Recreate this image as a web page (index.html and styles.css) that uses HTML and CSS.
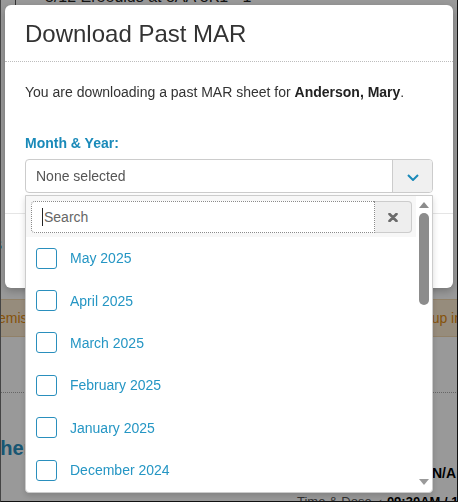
FILE: index.html
```html
<!DOCTYPE html>
<html lang="en">
<head>
<meta charset="utf-8">
<title>Download Past MAR</title>
<link rel="stylesheet" href="styles.css">
</head>
<body>
<div class="bg-page">
  <div class="bg-top"><span>5/12 Ereedius at 8AA 8K1 - 1</span></div>
  <div class="bg-s">S</div>
  <div class="bg-alert"><span class="a-left">Premise</span><span class="a-right">set up in</span></div>
  <div class="bg-rule"></div>
  <div class="bg-heading">Other</div>
  <div class="bg-na">N/A</div>
  <div class="bg-time"><span class="t-label">Time &amp; Dose <span class="t-check">✓</span></span> <b>09:30AM / 1 Tab</b></div>
</div>
<div class="backdrop"></div>
<div class="modal">
  <div class="modal-header"><h4 class="modal-title">Download Past MAR</h4></div>
  <div class="modal-body">
    <p class="intro">You are downloading a past MAR sheet for <b>Anderson, Mary</b>.</p>
    <div class="field-label">Month &amp; Year:</div>
    <div class="select">
      <div class="select-btn">
        <span class="select-text">None selected</span>
        <span class="select-caret"><svg width="12" height="7" viewBox="0 0 12 7"><polyline points="1,1 6,6 11,1" fill="none" stroke="#1a8ab9" stroke-width="2"/></svg></span>
      </div>
      <div class="dropdown">
        <div class="dd-main">
          <div class="dd-search">
            <div class="search-input"><span class="caret"></span>Search</div>
            <div class="search-clear"><svg width="10" height="9" viewBox="0 0 10 9"><path d="M1.5 1 L8.5 8 M8.5 1 L1.5 8" stroke="#6b6b6b" stroke-width="2.6" stroke-linecap="round"/></svg></div>
          </div>
          <ul class="dd-list">
            <li><span class="cb"></span>May 2025</li>
            <li><span class="cb"></span>April 2025</li>
            <li><span class="cb"></span>March 2025</li>
            <li><span class="cb"></span>February 2025</li>
            <li><span class="cb"></span>January 2025</li>
            <li><span class="cb"></span>December 2024</li>
            <li><span class="cb"></span>November 2024</li>
          </ul>
        </div>
        <div class="dd-scroll">
          <span class="arrow-up"></span>
          <span class="thumb"></span>
          <span class="arrow-down"></span>
        </div>
      </div>
    </div>
  </div>
  <div class="modal-footer"></div>
</div>
<div class="frame"></div>
</body>
</html>
```
FILE: styles.css
```css
* { box-sizing: border-box; }
html, body { margin: 0; padding: 0; }
body {
  width: 458px;
  height: 502px;
  overflow: hidden;
  background: #fff;
  font-family: "Liberation Sans", Arial, sans-serif;
  font-size: 14px;
  color: #333;
  position: relative;
}

/* background page (dimmed by backdrop) */
.bg-page { display: flex; flex-direction: column; }
.bg-top {
  height: 5px;
  overflow: hidden;
  display: flex;
  align-items: flex-end;
  margin-left: 15px;
  border-left: 1px solid #555;
  padding-left: 29px;
}
.bg-top span { font-size: 16px; line-height: 16px; color: #222; white-space: nowrap; }
.bg-s {
  margin-top: 232px;
  height: 16px;
  line-height: 16px;
  font-size: 15px;
  font-weight: bold;
  color: #1a8ab9;
  margin-left: -8px;
}
.bg-alert {
  margin-top: 46px;
  height: 38px;
  background: #fbe9cf;
  border-top: 1px solid #f2d7ad;
  border-bottom: 1px solid #f2d7ad;
  display: flex;
  justify-content: space-between;
  align-items: center;
  color: #e08a10;
  font-size: 14px;
  white-space: nowrap;
}
.a-left { margin-left: -16px; }
.a-right { margin-right: -4px; }
.bg-rule { margin-top: 55px; border-top: 1px dotted #aaa; }
.bg-heading {
  margin-top: 43px;
  margin-left: -22px;
  font-size: 20px;
  line-height: 24px;
  font-weight: bold;
  color: #2a8fbf;
}
.bg-na {
  margin-top: 5px;
  padding-left: 432px;
  font-size: 14px;
  line-height: 16px;
  font-weight: bold;
  color: #000;
  white-space: nowrap;
}
.bg-time {
  margin-top: 13px;
  padding-left: 297px;
  font-size: 13px;
  line-height: 16px;
  white-space: nowrap;
  color: #555;
}
.t-check { font-size: 10px; }
.bg-time b { color: #000; }

.backdrop {
  position: fixed;
  inset: 0;
  background: rgba(0, 0, 0, 0.4);
}

/* modal */
.modal {
  position: fixed;
  left: 5px;
  top: 5px;
  width: 448px;
  height: 283px;
  background: #fff;
  border-radius: 6px;
  box-shadow: 0 3px 9px rgba(0, 0, 0, 0.25);
  display: flex;
  flex-direction: column;
}
.modal-header {
  padding: 16px 20px 14px;
  border-bottom: 1px dotted #bdbdbd;
}
.modal-title {
  margin: 0;
  font-size: 24px;
  line-height: 26px;
  font-weight: normal;
  color: #333;
}
.modal-body { padding: 20px 20px 20px; }
.intro { margin: 0 0 31px; line-height: 20px; }
.intro b { color: #222; }
.field-label {
  font-weight: bold;
  color: #1a8ab9;
  line-height: 20px;
  margin-bottom: 6px;
}
.select { position: relative; }
.select-btn {
  display: flex;
  height: 34px;
  border: 1px solid #ccc;
  border-radius: 4px;
  overflow: hidden;
}
.select-text {
  flex: 1;
  padding-left: 10px;
  line-height: 32px;
  color: #555;
}
.select-caret {
  width: 40px;
  border-left: 1px solid #ccc;
  background: #f0f0f0;
  display: flex;
  align-items: center;
  justify-content: center;
  padding-top: 2px;
}
.modal-footer {
  flex: 1;
  border-top: 1px solid #e5e5e5;
}

/* dropdown */
.dropdown {
  position: absolute;
  left: 0;
  top: 36px;
  width: 408px;
  height: 298px;
  background: #fff;
  border: 1px solid #ccc;
  border-radius: 0 0 4px 4px;
  box-shadow: 0 3px 6px rgba(0, 0, 0, 0.15);
  display: flex;
  overflow: hidden;
  z-index: 2;
}
.dd-main { flex: 1; overflow: hidden; }
.dd-search {
  display: flex;
  padding: 5px 4px 4px 5px;
  background: #f7f7f7;
}
.search-input {
  flex: 1;
  height: 32px;
  border: 1px dotted #8a8a8a;
  border-radius: 4px 0 0 4px;
  background: #fff;
  display: flex;
  align-items: center;
  padding-left: 10px;
  color: #666;
  font-size: 14px;
}
.caret {
  width: 1px;
  height: 18px;
  background: #222;
  margin-right: 1px;
}
.search-clear {
  width: 37px;
  height: 32px;
  background: #eee;
  border: 1px solid #ccc;
  border-left: none;
  border-radius: 0 4px 4px 0;
  display: flex;
  align-items: center;
  justify-content: center;
}
.dd-list { list-style: none; margin: 0; padding: 0; }
.dd-list li {
  height: 42.4px;
  display: flex;
  align-items: center;
  padding-left: 10px;
  gap: 13px;
  color: #2596c4;
  white-space: nowrap;
}
.cb {
  width: 21px;
  height: 21px;
  border: 1.5px solid #2a8fbd;
  border-radius: 3px;
  flex: none;
}
.dd-scroll {
  width: 16px;
  display: flex;
  flex-direction: column;
  align-items: center;
  padding: 6px 0 7px;
}
.arrow-up {
  width: 0; height: 0;
  border-left: 5px solid transparent;
  border-right: 5px solid transparent;
  border-bottom: 6px solid #8c8c8c;
}
.thumb {
  margin-top: 5px;
  width: 10px;
  height: 92px;
  border-radius: 5px;
  background: #8c8c8c;
}
.arrow-down {
  margin-top: auto;
  width: 0; height: 0;
  border-left: 5px solid transparent;
  border-right: 5px solid transparent;
  border-top: 6px solid #9a9a9a;
}

.frame {
  position: fixed;
  inset: 0;
  border-left: 1px solid #444;
  border-right: 1px solid #111;
  border-bottom: 1px solid #111;
  pointer-events: none;
}
```
